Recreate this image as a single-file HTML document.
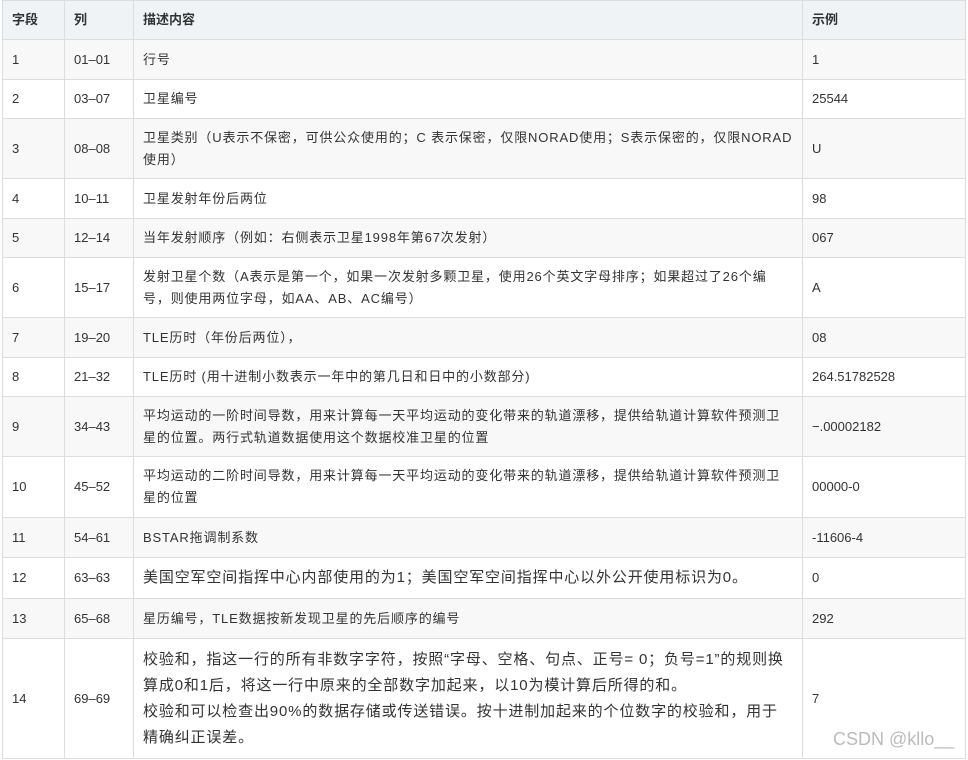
<!DOCTYPE html>
<html><head><meta charset="utf-8"><style>
body{margin:0;background:#fff;width:968px;height:760px;overflow:hidden;position:relative}
table{position:absolute;left:2px;top:0;border-collapse:collapse;width:963px;table-layout:fixed;font-family:"Liberation Sans","Noto Sans CJK SC",sans-serif;font-size:13px;color:#333;line-height:22px}
td,th{border:1px solid #ddd;padding:0 9px;text-align:left;vertical-align:middle}
th{background:#eff3f5;font-weight:bold;height:38px}
tr:nth-child(even) td{background:#f8f8f8}
td:nth-child(3){letter-spacing:0.85px}
.big{font-size:15px;line-height:26px}
.wm{position:absolute;left:833px;top:729px;font:18px "Liberation Sans",sans-serif;color:#bbb}
</style></head><body>
<table>
<colgroup><col style="width:62px"><col style="width:69px"><col style="width:669px"><col style="width:163px"></colgroup>
<tr><th>字段</th><th>列</th><th>描述内容</th><th>示例</th></tr>
<tr style="height:40px"><td>1</td><td>01–01</td><td>行号</td><td>1</td></tr>
<tr style="height:39px"><td>2</td><td>03–07</td><td>卫星编号</td><td>25544</td></tr>
<tr style="height:60px"><td>3</td><td>08–08</td><td>卫星类别（U表示不保密，可供公众使用的；C 表示保密，仅限NORAD使用；S表示保密的，仅限NORAD<br>使用）</td><td>U</td></tr>
<tr style="height:40px"><td>4</td><td>10–11</td><td>卫星发射年份后两位</td><td>98</td></tr>
<tr style="height:39px"><td>5</td><td>12–14</td><td>当年发射顺序（例如：右侧表示卫星1998年第67次发射）</td><td>067</td></tr>
<tr style="height:60px"><td>6</td><td>15–17</td><td>发射卫星个数（A表示是第一个，如果一次发射多颗卫星，使用26个英文字母排序；如果超过了26个编<br>号，则使用两位字母，如AA、AB、AC编号）</td><td>A</td></tr>
<tr style="height:40px"><td>7</td><td>19–20</td><td>TLE历时（年份后两位），</td><td>08</td></tr>
<tr style="height:39px"><td>8</td><td>21–32</td><td>TLE历时 (用十进制小数表示一年中的第几日和日中的小数部分)</td><td>264.51782528</td></tr>
<tr style="height:60px"><td>9</td><td>34–43</td><td>平均运动的一阶时间导数，用来计算每一天平均运动的变化带来的轨道漂移，提供给轨道计算软件预测卫<br>星的位置。两行式轨道数据使用这个数据校准卫星的位置</td><td>−.00002182</td></tr>
<tr style="height:61px"><td>10</td><td>45–52</td><td>平均运动的二阶时间导数，用来计算每一天平均运动的变化带来的轨道漂移，提供给轨道计算软件预测卫<br>星的位置</td><td>00000-0</td></tr>
<tr style="height:40px"><td>11</td><td>54–61</td><td>BSTAR拖调制系数</td><td>-11606-4</td></tr>
<tr style="height:41px"><td>12</td><td>63–63</td><td class="big">美国空军空间指挥中心内部使用的为1；美国空军空间指挥中心以外公开使用标识为0。</td><td>0</td></tr>
<tr style="height:40px"><td>13</td><td>65–68</td><td>星历编号，TLE数据按新发现卫星的先后顺序的编号</td><td>292</td></tr>
<tr style="height:120px"><td>14</td><td>69–69</td><td class="big">校验和，指这一行的所有非数字字符，按照“字母、空格、句点、正号= 0；负号=1”的规则换<br>算成0和1后，将这一行中原来的全部数字加起来，以10为模计算后所得的和。<br>校验和可以检查出90%的数据存储或传送错误。按十进制加起来的个位数字的校验和，用于<br>精确纠正误差。</td><td>7</td></tr>
</table>
<div class="wm">CSDN @kllo__</div>
</body></html>
